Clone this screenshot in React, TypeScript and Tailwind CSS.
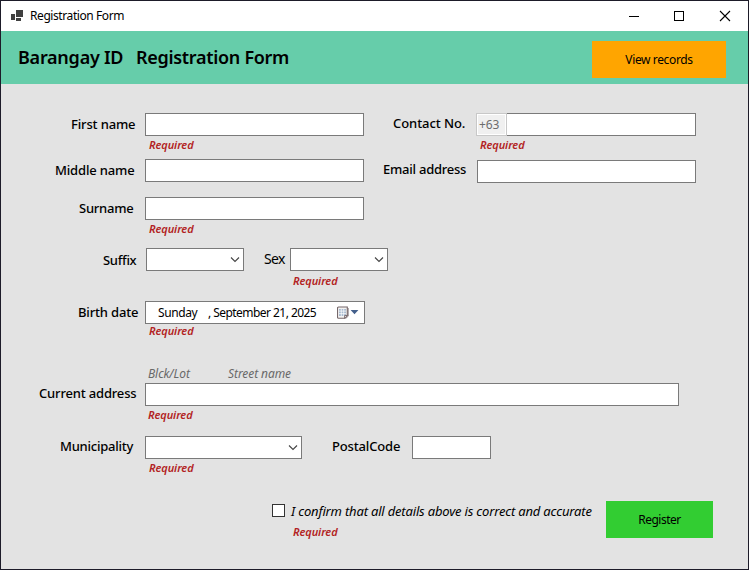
import type { ReactNode } from "react";

function Label({ className = "", children }: { className?: string; children: ReactNode }) {
  return (
    <span className={`block shrink-0 whitespace-pre leading-[20px] text-black ${className}`}>
      {children}
    </span>
  );
}

function Required({ className = "" }: { className?: string }) {
  return (
    <div className={`h-[14px] whitespace-pre text-[11px] font-semibold italic leading-[14px] tracking-[-0.1px] text-[#b22222] ${className}`}>
      Required
    </div>
  );
}

function TextBox({ className = "" }: { className?: string }) {
  return (
    <input
      type="text"
      className={`block h-[23px] shrink-0 border border-[#7a7a7a] bg-white px-1 text-[13px] outline-none ${className}`}
    />
  );
}

function Combo({ className = "" }: { className?: string }) {
  return (
    <div className={`flex h-[23px] shrink-0 items-center justify-end border border-[#7a7a7a] bg-white pr-[3px] ${className}`}>
      <svg width="10" height="7" viewBox="0 0 10 7" fill="none" stroke="#444" strokeWidth="1.1">
        <path d="M1 1.5 5 5.5 9 1.5" />
      </svg>
    </div>
  );
}

function CalendarIcon() {
  return (
    <svg width="12" height="13" viewBox="0 0 12 13">
      <path d="M1.5 1h8.8v8.6l-2.6 2.6H1.5a1 1 0 0 1-1-1V2a1 1 0 0 1 1-1z" fill="#f4f2f1" stroke="#75676a" strokeWidth="1.1" />
      <path d="M2 3h7v7H2z" fill="#a9bbd0" />
      <path d="M2 5.1h7M2 7.6h7M4.3 3v7M6.7 3v7" stroke="#fff" strokeWidth=".7" />
      <path d="M7.6 12.2V9.5h2.7z" fill="#fff" stroke="#75676a" strokeWidth=".9" />
      <path d="M11.2 2v8.2L8.5 12.6" fill="none" stroke="#75676a" strokeWidth=".8" />
    </svg>
  );
}

function TitleBar() {
  return (
    <div className="flex h-[30px] items-center bg-white pl-[10px]">
      <svg width="13" height="12" viewBox="0 0 13 12" fill="#404040" shapeRendering="crispEdges">
        <path d="M0 4h4v6H0zM5 0h7v7H5zM5 8h5v3H5z" />
      </svg>
      <span className="ml-[6px] whitespace-pre text-[12px] leading-[20px] tracking-[-0.42px] text-black">Registration Form</span>
      <div className="ml-auto flex items-center pr-[16px]">
        <svg width="104" height="12" viewBox="0 0 104 12" fill="none" stroke="#000">
          <path d="M1 6.5h10M46.5 1.5h9v9h-9z" shapeRendering="crispEdges" />
          <path d="M92 1l10 10M102 1L92 11" strokeWidth="1.1" />
        </svg>
      </div>
    </div>
  );
}

function Header() {
  return (
    <header className="flex h-[53px] items-start bg-[#66cdaa] pl-[17px] pr-[22px]">
      <h1 className="flex pt-[13px] text-[18px] font-semibold leading-[26px] text-black">
        <span className="w-[118px] tracking-[-0.25px]">Barangay ID</span>
        <span className="whitespace-pre tracking-[-0.3px]">Registration Form</span>
      </h1>
      <button className="ml-auto mt-[10px] h-[37px] w-[134px] bg-[#ffa500] text-[12px] tracking-[-0.37px] text-black">
        View records
      </button>
    </header>
  );
}

export default function App() {
  return (
    <div className="flex h-[570px] w-[749px] flex-col border border-[#1d1b29] bg-[#e3e3e3] font-['Noto_Sans',sans-serif]">
      <TitleBar />
      <Header />
      <main className="pt-[29px] text-[13px] font-medium">
        <div className="flex items-start">
          <section className="w-[375px] shrink-0">
            <div className="flex pl-[70px]">
              <Label className="mt-px w-[74px] tracking-[-0.15px]">First name</Label>
              <TextBox className="w-[219px]" />
            </div>
            <Required className="mt-[2px] pl-[148px]" />
            <div className="mt-[7px] flex pl-[54px]">
              <Label className="mt-px w-[90px] tracking-[-0.16px]">Middle name</Label>
              <TextBox className="w-[219px]" />
            </div>
            <div className="mt-[15px] flex pl-[78px]">
              <Label className="mt-px w-[66px] tracking-[-0.25px]">Surname</Label>
              <TextBox className="w-[219px]" />
            </div>
            <Required className="mt-[2px] pl-[148px]" />
          </section>
          <section className="grow">
            <div className="flex pl-[17px]">
              <Label className="w-[83px] tracking-[-0.07px]">Contact No.</Label>
              <div className="flex h-[23px] w-[31px] items-center border border-[#c8c8c8] bg-white p-px">
                <span className="h-[19px] w-[27px] bg-[#f0f0f0] pl-px text-[12px] font-normal leading-[19px] tracking-[-0.1px] text-[#6d6d6d]">+63</span>
              </div>
              <TextBox className="w-[189px] border-l-0" />
            </div>
            <Required className="mt-[2px] pl-[104px]" />
            <div className="mt-[8px] flex pl-[7px]">
              <Label className="-mt-px w-[94px] tracking-[-0.24px]">Email address</Label>
              <TextBox className="w-[219px]" />
            </div>
          </section>
        </div>

        <div className="mt-[12px] flex pl-[102px]">
          <Label className="mt-[2px] w-[43px] tracking-[-0.3px]">Suffix</Label>
          <Combo className="w-[98px]" />
          <Label className="ml-[20px] mt-px w-[26px] text-[14px] font-normal tracking-[-0.7px]">Sex</Label>
          <Combo className="w-[98px]" />
        </div>
        <Required className="mt-[3px] pl-[292px]" />

        <div className="mt-[13px] flex pl-[77px]">
          <Label className="mt-px w-[67px] tracking-[-0.17px]">Birth date</Label>
          <div className="flex h-[23px] w-[220px] items-center whitespace-pre border border-[#7a7a7a] bg-white pl-[12px] text-[12px] font-normal text-black">
            <span className="w-[50px] tracking-[-0.4px]">Sunday</span>
            <span className="tracking-[-0.55px]">, September 21, 2025</span>
            <div className="ml-auto flex items-center gap-px pr-[5px]">
              <CalendarIcon />
              <svg width="9" height="5" viewBox="0 0 9 5">
                <path d="M.6 0h7.8L4.5 4.3z" fill="#44608c" />
              </svg>
            </div>
          </div>
        </div>
        <Required className="pl-[148px]" />

        <div className="mt-[27px] flex h-[18px] whitespace-pre pl-[147px] text-[12px] font-normal italic leading-[18px] tracking-[-0.08px] text-[#696969]">
          <span className="w-[80px]">Blck/Lot</span>
          <span>Street name</span>
        </div>
        <div className="flex pl-[38px]">
          <Label className="w-[106px] tracking-[-0.17px]">Current address</Label>
          <TextBox className="w-[534px]" />
        </div>
        <Required className="mt-[2px] pl-[147px]" />

        <div className="mt-[14px] flex pl-[59px]">
          <Label className="w-[85px] tracking-[-0.24px]">Municipality</Label>
          <Combo className="w-[157px]" />
          <Label className="ml-[30px] w-[80px] tracking-[-0.15px]">PostalCode</Label>
          <TextBox className="w-[79px]" />
        </div>
        <Required className="mt-[2px] pl-[148px]" />

        <div className="mt-[26px] flex items-start pl-[271px]">
          <div>
            <div className="flex items-start">
              <div className="mt-[3px] h-[13px] w-[13px] border border-[#333] bg-white" />
              <span className="ml-[6px] whitespace-pre text-[13px] font-normal italic leading-[20px] tracking-[-0.18px] text-black">
                I confirm that all details above is correct and accurate
              </span>
            </div>
            <Required className="mt-[4px] pl-[21px]" />
          </div>
          <button className="ml-auto mr-[35px] h-[37px] w-[107px] bg-[#32cd32] text-[12px] font-normal tracking-[-0.5px] text-black">
            Register
          </button>
        </div>
      </main>
    </div>
  );
}
